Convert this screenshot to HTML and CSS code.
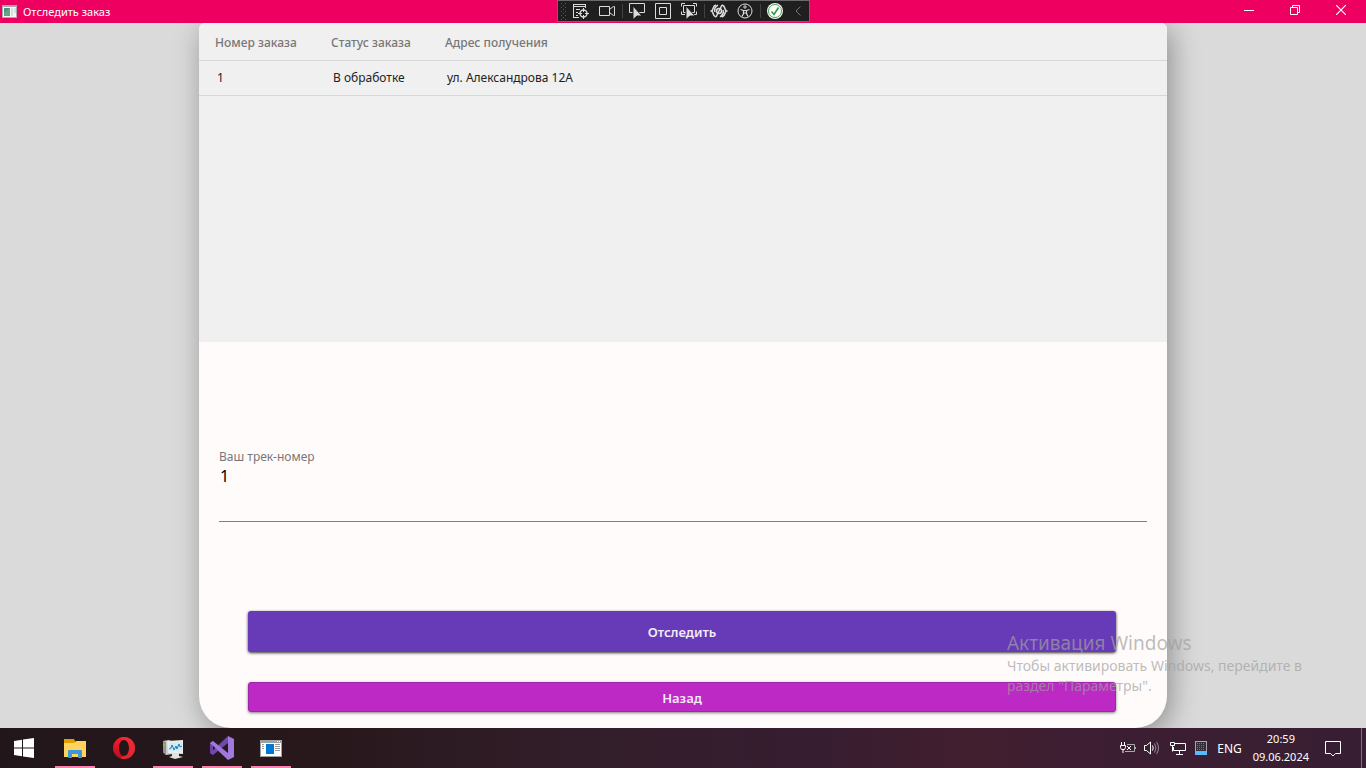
FILE: index.html
```html
<!DOCTYPE html>
<html lang="ru">
<head>
<meta charset="utf-8">
<title>Отследить заказ</title>
<link rel="stylesheet" href="styles.css">
</head>
<body>
<header class="titlebar">
  <div class="window-title">
    <svg width="15" height="13" viewBox="0 0 15 13"><path d="M0 0h15v13H0z" fill="#a9a9ae"/><path d="M1 2h13v10H1z" fill="#f5f5f5"/><path d="M2 3h6v8H2z" fill="#4b8e8b"/><path d="M2 8l6-5v8H2z" fill="#62a87c"/><path d="M9 3h2v8H9z" fill="#ddd"/><path d="M12 3h2v5h-2z" fill="#cde5d4"/></svg>
    <h1 class="window-name">Отследить заказ</h1>
  </div>
  <div class="devbar" role="toolbar" aria-label="Отладка">
    <svg width="10" height="20" viewBox="0 0 10 20" fill="#5a5a5a"><path d="M3 2h1v1H3zM7 2h1v1H7zM5 4h1v1H5zM3 6h1v1H3zM7 6h1v1H7zM5 8h1v1H5zM3 10h1v1H3zM7 10h1v1H7zM5 12h1v1H5zM3 14h1v1H3zM7 14h1v1H7zM5 16h1v1H5zM3 18h1v1H3zM7 18h1v1H7z"/></svg>
    <button class="dev-button" aria-label="Визуальное дерево"><svg width="18" height="18" viewBox="0 0 18 18" fill="none" stroke="#dcdcdc"><path d="M1 2.500h13M1.500 2v14M1 4.500h13M13.500 3v3M1 15.500h6M4 7.500h4M4 10.500h2M4 13.500h2"/><circle cx="11.500" cy="11.500" r="3.500" stroke-width="1.400"/><path d="M11.500 6v4M11.500 13v4M6 11.500h4M13 11.500h4"/></svg></button>
    <button class="dev-button" aria-label="Запись"><svg width="18" height="18" viewBox="0 0 18 18" fill="none" stroke="#dcdcdc"><path d="M1.500 4.500h10v9h-10zM11.500 7.500l4-3h1v9h-1l-4-3"/></svg></button>
    <span class="dev-separator"></span>
    <button class="dev-button" aria-label="Выбрать элемент"><svg width="18" height="18" viewBox="0 0 18 18"><path d="M1.500 1.500h15v9h-15z" fill="none" stroke="#dcdcdc"/><path d="M5 4v13.500l4-3.500h5z" fill="#dcdcdc" stroke="#1f1f1f"/></svg></button>
    <button class="dev-button" aria-label="Границы макета"><svg width="18" height="18" viewBox="0 0 18 18" fill="none" stroke="#dcdcdc"><path d="M1.500 1.500h15v15h-15z"/><path d="M5.500 5.500h7v7h-7z"/></svg></button>
    <button class="dev-button" aria-label="Отследить элемент"><svg width="18" height="18" viewBox="0 0 18 18"><path d="M1.500 4.500v-3H5M13 1.500h3.500v3M1.500 9.500v3H5M13 12.500h3.500v-3M3.500 3.500h11v7h-11z" fill="none" stroke="#dcdcdc"/><path d="M6 4v13.500l4-3.500h5z" fill="#dcdcdc" stroke="#1f1f1f"/></svg></button>
    <span class="dev-separator"></span>
    <button class="dev-button" aria-label="Горячая перезагрузка"><svg width="18" height="18" viewBox="0 0 18 18" fill="none" stroke="#dcdcdc" stroke-width="1.500"><path d="M6 3C2 4 4 8 1.500 9 4 10 2 14 6 15M12 3c4 1 2 5 4.500 6-2.500 1-.5 5-4.500 6M8 3C5 5 4 7 5 10M10 15c3-2 4-4 3-7"/><circle cx="9" cy="9" r="2.500"/><path d="M12 3L6 15"/></svg></button>
    <button class="dev-button" aria-label="Специальные возможности"><svg width="18" height="18" viewBox="0 0 18 18" fill="none" stroke="#dcdcdc"><circle cx="9" cy="9" r="7"/><circle cx="9" cy="5" r="1.200"/><path d="M4.500 7.500l3 1h3l3-1M7.500 8.500v3L6 14.500M10.500 8.500v3l1.500 3M7.500 11h3" stroke-width="1.200"/></svg></button>
    <span class="dev-separator"></span>
    <button class="dev-button" aria-label="Готово"><svg width="18" height="18" viewBox="0 0 18 18"><circle cx="9" cy="9" r="8" fill="#f4f4f4"/><circle cx="9" cy="9" r="6.500" fill="#fff" stroke="#47a64e"/><path d="M5.500 9.500L8 12.500l4.500-7" fill="none" stroke="#2e9b38" stroke-width="1.600"/></svg></button>
    <button class="dev-button dev-collapse" aria-label="Свернуть панель"><svg width="8" height="12" viewBox="0 0 8 12"><path d="M6.500 1.500L2 6l4.500 4.500" fill="none" stroke="#777"/></svg></button>
  </div>
  <div class="window-controls">
    <button class="window-button" aria-label="Свернуть"><svg width="10" height="10" viewBox="0 0 10 10"><path d="M0 5.500h10" stroke="#fff"/></svg></button>
    <button class="window-button" aria-label="Восстановить"><svg width="10" height="10" viewBox="0 0 10 10" fill="none" stroke="#fff"><path d="M.5 2.500h7v7h-7zM2.500 2.500v-2h7v7h-2"/></svg></button>
    <button class="window-button" aria-label="Закрыть"><svg width="10" height="10" viewBox="0 0 10 10"><path d="M0 0l10 10M10 0L0 10" stroke="#fff" stroke-width="1.200"/></svg></button>
  </div>
</header>

<main class="workspace">
  <section class="card">
    <div class="orders">
      <table class="orders-table">
        <thead><tr><th class="col-number">Номер заказа</th><th class="col-status">Статус заказа</th><th>Адрес получения</th></tr></thead>
        <tbody><tr><td>1</td><td>В обработке</td><td>ул. Александрова 12А</td></tr></tbody>
      </table>
    </div>
    <form class="track-form">
      <div class="field">
        <label class="field-label" for="track">Ваш трек-номер</label>
        <input class="field-input" id="track" type="text" value="1">
      </div>
      <div class="actions">
        <button class="action action-primary" type="button">Отследить</button>
        <button class="action action-back" type="button">Назад</button>
      </div>
    </form>
  </section>
  <aside class="activation">
    <p class="activation-title">Активация Windows</p>
    <p class="activation-text">Чтобы активировать Windows, перейдите в<br>раздел "Параметры".</p>
  </aside>
</main>

<footer class="taskbar">
  <nav class="apps">
    <button class="app app-start" aria-label="Пуск"><svg width="20" height="20" viewBox="0 0 20 20" fill="#fff"><path d="M0 3l8-1.200V9.500H0zM9 1.600L20 0v9.500H9zM0 10.500h8v7.700L0 17zM9 10.500h11V20L9 18.400z"/></svg></button>
    <button class="app app-open" aria-label="Проводник"><svg width="24" height="24" viewBox="0 0 24 24"><path d="M1 3h10l1 2v4H1z" fill="#e2a000"/><path d="M1 7h10l2-2h10v16H1z" fill="#ffd45e"/><path d="M5 22v-7q0-1 1-1h12q1 0 1 1v7h-4v-4H9v4z" fill="#3c96dc"/></svg></button>
    <button class="app" aria-label="Opera"><svg width="24" height="24" viewBox="0 0 24 24"><defs><linearGradient id="opera" x2="0" y2="1"><stop stop-color="#ff1b2d"/><stop offset="1" stop-color="#b50d1c"/></linearGradient></defs><path d="M12 1a11 11 0 100 22 11 11 0 000-22zm0 3c3 0 5 3.500 5 8s-2 8-5 8-5-3.500-5-8 2-8 5-8z" fill="url(#opera)" fill-rule="evenodd"/><path d="M12 1c7 0 11 5 11 11s-4 11-11 11c-1.500 0-3-.5-4-1l4-2c3 0 5-3.500 5-8s-2-8-5-8L8 2c1-.6 2.500-1 4-1z" fill="#ef3038" opacity=".7"/></svg></button>
    <button class="app app-open" aria-label="Монитор ресурсов"><svg width="24" height="24" viewBox="0 0 24 24"><path d="M2 5l6-1 4 2v12l-7 1-3-3z" fill="#c9cccb"/><path d="M2 5l3 1v13l-3-3z" fill="#8e9492"/><path d="M2 8h2v2H2z" fill="#7bc943"/><path d="M6 5l16-1v14l-15-1z" fill="#e8eceb"/><path d="M8 7l13-1v9L9 15z" fill="#d4e8f2"/><path d="M8 13l2-1 1-3 2 5 2-4 1 3 2-5 1 3 2-1" fill="none" stroke="#1683b6"/><path d="M11 17h7v3l4 1-8 2-6-2 3-1z" fill="#dfe1e0"/></svg></button>
    <button class="app app-open" aria-label="Visual Studio"><svg width="24" height="24" viewBox="0 0 24 24"><path d="M18 0l6 3v18l-6 3z" fill="#a179dc"/><path d="M0 7l3-2v14l-3-2z" fill="#6b45a4"/><path d="M18 0v7L3 19l-3-2z" fill="#6f49ad"/><path d="M3 5l15 12v7L0 7z" fill="#a077dd"/></svg></button>
    <button class="app app-open" aria-label="Отследить заказ"><svg width="24" height="24" viewBox="0 0 24 24"><path d="M1 4h22v17H1z" fill="#a0a0a0"/><path d="M2 7h20v13H2z" fill="#fff"/><path d="M7 8h8v10H7z" fill="#0078d7"/><path d="M3 8.500h2M3 10.500h2M3 12.500h2M16 8.500h5M16 10.500h5M16 12.500h5M16 14.500h5" stroke="#999"/><path d="M18 5h1v1h-1zM20 5h1v1h-1z" fill="#fff"/></svg></button>
  </nav>
  <div class="tray">
    <div class="tray-power">
      <svg width="16" height="16" viewBox="0 0 16 16" fill="none" stroke="#fff"><path d="M1.500 2v3M4.500 2v3M.5 5.500h5v2l-1 2h-3l-1-2zM3 9v4"/><path d="M7 4.500h7.500v7H5M15.500 7v2" stroke="#aaa"/><path d="M7 6l4 4M11 6l-4 4"/></svg>
      <svg width="18" height="16" viewBox="0 0 18 16" fill="none" stroke="#fff"><path d="M1.500 5.500h2L7.500 2v12l-4-3.500h-2zM9.500 5.500q1.500 2.500 0 5"/><path d="M11.500 3.500q3 4.500 0 9M13.500 2q4 6 0 12" stroke="#998a95"/></svg>
    </div>
    <svg width="18" height="16" viewBox="0 0 18 16" fill="none" stroke="#fff"><path d="M6 3.500h10.500v7H4.500V7M10.500 11v3M7 14.500h7M1.500 2.500h4v3h-4zM3.500 5.500v6"/></svg>
    <svg width="12" height="14" viewBox="0 0 12 14"><path d="M0 0h12v14H0z" fill="#a9a4aa"/><path d="M1 1h10v9H1z" fill="#34303a"/><path d="M2 2.500h8M2 4.500h8M2 6.500h8M2 8.500h8" stroke="#77737c" stroke-dasharray="1 1"/><path d="M0 10h12v4H0z" fill="#58b9ff"/></svg>
    <span class="language">ENG</span>
    <time class="clock" datetime="2024-06-09T20:59">20:59<br>09.06.2024</time>
    <button class="notices" aria-label="Уведомления"><svg width="18" height="18" viewBox="0 0 18 18"><path d="M1.500 2.500h15v12h-5L9 17l-2.500-2.500h-5z" fill="none" stroke="#fff"/></svg></button>
    <span class="show-desktop"></span>
  </div>
</footer>
</body>
</html>
```
FILE: styles.css
```css
* {
  box-sizing: border-box;
}

body {
  margin: 0;
  height: 100vh;
  display: flex;
  flex-direction: column;
  background: #dadada;
  color: #222;
  font-family: "Noto Sans", "Open Sans", sans-serif;
  font-size: 12px;
}

button {
  border: 0;
  padding: 0;
  background: none;
  color: inherit;
  font: inherit;
}

svg {
  display: block;
  flex: none;
}

.titlebar {
  display: grid;
  grid-template-columns: 1fr auto 1fr;
  height: 23px;
  background: #ed0060;
  color: #fff;
}

.window-title {
  display: flex;
  align-items: center;
  gap: 6px;
  padding-left: 2px;
}

.window-name {
  margin: 0;
  font-size: 11px;
  font-weight: 400;
}

.devbar {
  display: flex;
  align-items: center;
  height: 22px;
  border: 1px solid #6a6a6a;
  background: #1f1f1f;
}

.dev-button {
  display: grid;
  place-items: center;
  width: 26px;
  height: 20px;
}

.dev-collapse {
  width: 21px;
}

.dev-separator {
  width: 1px;
  height: 14px;
  margin: 0 1px 0 2px;
  background: #424242;
}

.window-controls {
  display: flex;
  justify-content: flex-end;
  padding-right: 2px;
}

.window-button {
  display: grid;
  place-items: center;
  width: 46px;
  height: 20px;
}

.workspace {
  position: relative;
  flex: 1;
  display: flex;
  min-height: 0;
  padding: 0 199px;
  overflow: hidden;
}

.card {
  flex: 1;
  display: flex;
  flex-direction: column;
  border-radius: 6px 6px 32px 32px;
  background: #fffbfa;
  box-shadow: 4px 6px 28px rgba(0, 0, 0, 0.35);
}

.orders {
  flex: 0 0 45.25%;
  border-radius: 6px 6px 0 0;
  background: #f0f0f0;
}

.orders-table {
  width: 100%;
  border-collapse: collapse;
  text-align: left;
}

.orders-table th {
  height: 37px;
  padding: 2px 0 0 16px;
  border-bottom: 1px solid #d8d8d8;
  color: #777;
  font-weight: 500;
}

.orders-table td {
  height: 35px;
  padding: 0 0 0 18px;
  border-bottom: 1px solid #d8d8d8;
}

.orders-table .col-number {
  width: 116px;
}

.orders-table .col-status {
  width: 114px;
}

.track-form {
  flex: 1;
  display: flex;
  flex-direction: column;
  justify-content: flex-end;
  gap: 89px;
  padding: 0 20px 16px;
}

.field {
  display: flex;
  flex-direction: column;
}

.field-label {
  line-height: 16px;
  color: #777;
}

.field-input {
  height: 57px;
  padding: 0 1px 34px;
  border: 0;
  border-bottom: 1px solid #808080;
  outline: 0;
  background: none;
  color: #000;
  font: 16px "Noto Sans", sans-serif;
}

.actions {
  display: flex;
  flex-direction: column;
  gap: 30px;
  padding: 0 31px 0 29px;
}

.action {
  border-radius: 3px;
  color: #f3eaf7;
  font-size: 13px;
  font-weight: 600;
}

.action-primary {
  height: 41px;
  background: #673ab7;
  box-shadow: 0 1px 3px rgba(0, 0, 0, 0.8);
}

.action-back {
  height: 30px;
  padding-top: 2px;
  border: 1px solid #9c27a8;
  background: #bc29c4;
  box-shadow: 0 1px 3px rgba(0, 0, 0, 0.5);
}

.activation {
  position: absolute;
  right: 64px;
  bottom: 32px;
  color: rgba(160, 160, 160, 0.7);
}

.activation p {
  margin: 0;
}

.activation-title {
  font-size: 19px;
  line-height: 26px;
}

.activation-text {
  font-size: 14px;
  line-height: 20px;
}

.taskbar {
  display: flex;
  justify-content: space-between;
  height: 40px;
  background: linear-gradient(90deg, #21161a 0, #28181c 25%, #321e2a 42%, #361d30 60%, #421f2f 71%, #3d1e33 80%, #381e32 100%);
  color: #fff;
}

.apps {
  display: flex;
  gap: 1px;
}

.app {
  display: grid;
  place-items: center;
  width: 48px;
  height: 40px;
}

.app-start {
  margin-right: 2px;
}

.app-open {
  background: linear-gradient(#f981b1, #f981b1) center bottom / 40px 2px no-repeat;
}

.tray {
  display: flex;
  align-items: center;
  gap: 8px;
}

.tray-power {
  display: flex;
  gap: 7px;
}

.clock {
  margin-left: 3px;
  font-size: 11px;
  line-height: 18px;
  text-align: center;
}

.language {
  margin-left: 2px;
}

.notices {
  margin: 0 11px 0 7px;
}

.show-desktop {
  width: 5px;
  height: 40px;
  border-left: 1px solid #80707b;
}
```
